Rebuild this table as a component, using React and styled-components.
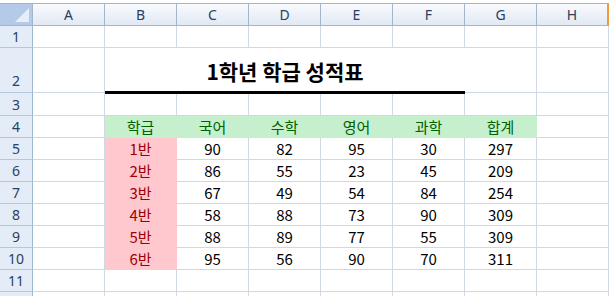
import styled, { createGlobalStyle } from "styled-components";

const Global = createGlobalStyle`
  html, body {
    margin: 0;
    padding: 0;
    background: #ffffff;
    overflow: hidden;
  }
`;

const Page = styled.div`
  width: 609px;
  height: 296px;
  padding-top: 3px;
  box-sizing: border-box;
  overflow: hidden;
  font-family: "Noto Sans CJK KR", "Noto Sans", sans-serif;
`;

const Sheet = styled.div`
  display: grid;
  grid-template-columns: 33px repeat(8, 72px);
  grid-template-rows: 23px 22px 45px 23px repeat(9, 22px);
`;

const Corner = styled.div`
  box-sizing: border-box;
  border-top: 1px solid #9eb6ce;
  border-right: 1px solid #9eb6ce;
  border-bottom: 1px solid #9eb6ce;
  background: #b4cae8;
  display: flex;
  align-items: flex-end;
  justify-content: flex-end;
  padding: 0 3px 3px 0;
`;

const CornerMark = styled.div`
  width: 0;
  height: 0;
  border-left: 14px solid transparent;
  border-bottom: 14px solid #e8eef7;
`;

const ColHead = styled.div`
  box-sizing: border-box;
  border-top: 1px solid #9eb6ce;
  border-right: ${(p) => (p.$edge ? "2px solid #f29a36" : "1px solid #9eb6ce")};
  border-bottom: 1px solid #9eb6ce;
  background: linear-gradient(#f8fafd, #e2e9f3);
  display: flex;
  align-items: center;
  justify-content: center;
  font-family: "Noto Sans", sans-serif;
  font-size: 14px;
  color: #2a4060;
`;

const RowHead = styled.div`
  box-sizing: border-box;
  border-right: 1px solid #9eb6ce;
  border-bottom: 1px solid #b5c7db;
  background: #e4ecf7;
  display: flex;
  align-items: ${(p) => (p.$tall ? "flex-end" : "center")};
  padding-bottom: ${(p) => (p.$tall ? "2px" : "0")};
  justify-content: center;
  font-family: "Noto Sans", sans-serif;
  font-size: 14px;
  color: #2a4060;
`;

const fills = {
  head: { bg: "#c6efce", fg: "#006100" },
  bad: { bg: "#ffc7ce", fg: "#9c0006" },
};

const Cell = styled.div`
  box-sizing: border-box;
  border-right: 1px solid ${(p) => (p.$fill ? fills[p.$fill].bg : "#d0d7e5")};
  border-bottom: 1px solid ${(p) => (p.$fill ? fills[p.$fill].bg : "#d0d7e5")};
  background: ${(p) => (p.$fill ? fills[p.$fill].bg : "#ffffff")};
  color: ${(p) => (p.$fill ? fills[p.$fill].fg : "#000000")};
  display: flex;
  align-items: center;
  justify-content: center;
  font-size: 15px;
  line-height: 1;
`;

const TitleCell = styled.div`
  grid-column: span 5;
  box-sizing: border-box;
  border-bottom: 2px solid #000000;
  box-shadow: 0 1px 0 #000000;
  position: relative;
  z-index: 1;
  display: flex;
  align-items: flex-end;
  justify-content: center;
  padding-bottom: 9px;
  font-size: 21px;
  font-weight: 700;
  color: #000000;
  line-height: 1;
`;

const cols = ["A", "B", "C", "D", "E", "F", "G", "H"];
const subjects = ["학급", "국어", "수학", "영어", "과학", "합계"];
const scores = [
  ["1반", 90, 82, 95, 30, 297],
  ["2반", 86, 55, 23, 45, 209],
  ["3반", 67, 49, 54, 84, 254],
  ["4반", 58, 88, 73, 90, 309],
  ["5반", 88, 89, 77, 55, 309],
  ["6반", 95, 56, 90, 70, 311],
];

const BlankRow = ({ n }) => (
  <>
    <RowHead>{n}</RowHead>
    {cols.map((c) => (
      <Cell key={c} />
    ))}
  </>
);

const App = () => {
  return (
    <Page>
      <Global />
      <Sheet>
        <Corner>
          <CornerMark />
        </Corner>
        {cols.map((c) => (
          <ColHead key={c} $edge={c === "H"}>
            {c}
          </ColHead>
        ))}

        <BlankRow n={1} />

        {/* title row */}
        <RowHead $tall>2</RowHead>
        <Cell />
        <TitleCell>1학년 학급 성적표</TitleCell>
        <Cell />
        <Cell />

        <BlankRow n={3} />

        <RowHead>4</RowHead>
        <Cell />
        {subjects.map((s) => (
          <Cell key={s} $fill="head">
            {s}
          </Cell>
        ))}
        <Cell />

        {scores.map((row, i) => (
          <>
            <RowHead key={"h" + i}>{i + 5}</RowHead>
            <Cell key={"a" + i} />
            {row.map((v, j) => (
              <Cell key={i + "-" + j} $fill={j === 0 ? "bad" : undefined}>
                {v}
              </Cell>
            ))}
            <Cell key={"z" + i} />
          </>
        ))}

        <BlankRow n={11} />
        {/* row 12 is only a sliver at the bottom edge */}
        <BlankRow n="" />
      </Sheet>
    </Page>
  );
};

export default App;
